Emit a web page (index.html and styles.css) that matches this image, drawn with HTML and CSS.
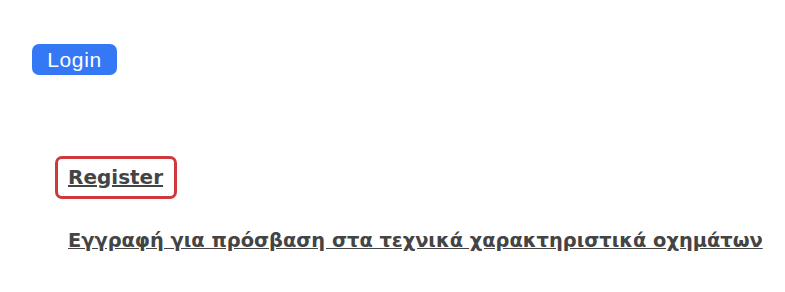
FILE: index.html
```html
<!DOCTYPE html>
<html>
<head>
  <meta charset="UTF-8">
  <title>Register</title>
  <link rel="stylesheet" href="styles.css">
</head>
<body>
  <div class="top">
    <button class="login">Login</button>
  </div>
  <div class="content">
    <div class="register-box">
      <a href="#" class="register">Register</a>
    </div>
    <p class="info"><a href="#">Εγγραφή για πρόσβαση στα τεχνικά χαρακτηριστικά οχημάτων</a></p>
  </div>
</body>
</html>
```

FILE: styles.css
```css
body {
  margin: 0;
  background: #ffffff;
  font-family: "DejaVu Sans", Verdana, sans-serif;
}
.top {
  padding: 44px 0 0 32px;
}
.login {
  width: 85px;
  height: 31px;
  padding: 0;
  border: none;
  border-radius: 7px;
  background-color: #3478f6;
  color: white;
  font-family: "Liberation Sans", Arial, sans-serif;
  font-size: 21px;
  letter-spacing: 0.6px;
  cursor: pointer;
}
.content {
  padding: 81px 0 0 55px;
}
.register-box {
  display: inline-block;
  box-sizing: border-box;
  width: 122px;
  height: 43px;
  padding: 6px 0 0 10px;
  border: 3px solid #d0393b;
  border-radius: 7px;
}
.register {
  color: #444444;
  font-weight: bold;
  font-size: 20px;
}
.info {
  margin: 30px 0 0 13px;
}
.info a {
  color: #444444;
  font-weight: bold;
  font-size: 19.4px;
}
```
